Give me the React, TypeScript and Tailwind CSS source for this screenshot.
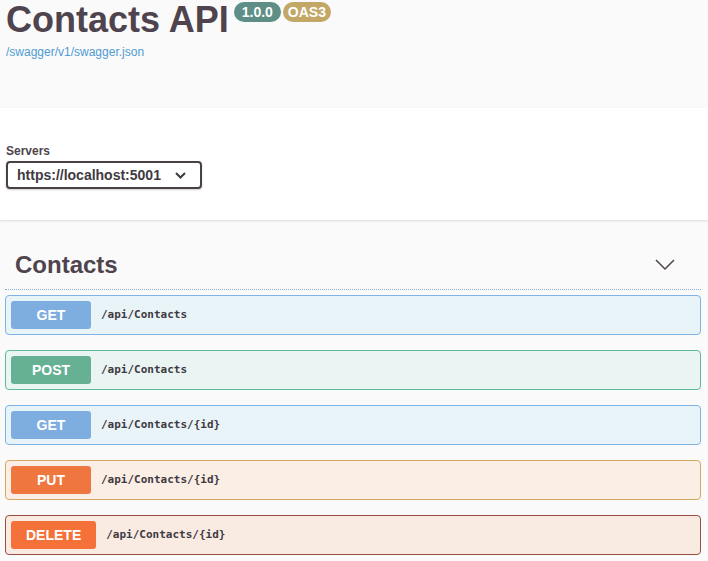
import React from "react";

const sans = "font-['Liberation_Sans',Arial,sans-serif]";
const mono = "font-['DejaVu_Sans_Mono',monospace]";

type Op = {
  method: string;
  path: string;
  box: string;
  badge: string;
};

const ops: Op[] = [
  { method: "GET", path: "/api/Contacts", box: "border-[#7eb3e6] bg-[#e9f4f8]", badge: "bg-[#7eaee0]" },
  { method: "POST", path: "/api/Contacts", box: "border-[#5fba98] bg-[#e9f4f3]", badge: "bg-[#66b094]" },
  { method: "GET", path: "/api/Contacts/{id}", box: "border-[#7eb3e6] bg-[#e9f4f8]", badge: "bg-[#7eaee0]" },
  { method: "PUT", path: "/api/Contacts/{id}", box: "border-[#d4aa62] bg-[#fbeee5]", badge: "bg-[#f07640]" },
  { method: "DELETE", path: "/api/Contacts/{id}", box: "border-[#9a4e3e] bg-[#f9ebe2]", badge: "bg-[#f4713a]" },
];

function OpBlock({ op }: { op: Op }) {
  return (
    <div className={`mb-[15px] flex h-[40px] items-center rounded-[4px] border p-[5px] ${op.box}`}>
      <span
        className={`flex h-[28px] min-w-[80px] items-center justify-center rounded-[3px] px-[15px] text-[14px] font-bold text-white ${sans} ${op.badge}`}
      >
        {op.method}
      </span>
      <span className={`ml-[10px] text-[11px] font-semibold text-[#3f3a42] ${mono}`}>{op.path}</span>
    </div>
  );
}

export default function App() {
  return (
    <div className={`min-h-[561px] w-[708px] bg-[#fafafa] ${sans} text-[#4f444d]`}>
      {/* info */}
      <div className="h-[108px] px-[6px]">
        <div className="flex items-start">
          <h1 className="text-[36px] font-bold leading-[40px] text-[#4f434d]">Contacts API</h1>
          <span className="ml-[5px] mt-[2px] flex h-[20px] items-center rounded-full bg-[#5e8e85] px-[8px] text-[14px] font-bold text-white">
            1.0.0
          </span>
          <span className="ml-[2px] mt-[2px] flex h-[20px] items-center rounded-full bg-[#c3a767] px-[5px] text-[14px] font-bold text-white">
            OAS3
          </span>
        </div>
        <a className="mt-[4px] block text-[12px] leading-[16px] text-[#4f9bd3]">/swagger/v1/swagger.json</a>
      </div>

      {/* servers */}
      <div className="h-[112px] bg-white px-[6px] pt-[35px] shadow-[0_1px_2px_0_rgba(0,0,0,0.12)]">
        <div className="text-[12px] font-bold leading-[16px] text-[#4f444d]">Servers</div>
        <div className="mt-[2px] flex h-[28px] w-[196px] items-center rounded-[4px] border-2 border-[#4a4048] bg-white pl-[9px] pr-[14px] shadow-[0_1px_2px_0_rgba(0,0,0,0.2)]">
          <span className="flex-1 text-[14px] font-bold text-[#3f3a42]">https://localhost:5001</span>
          <svg width="11" height="7" viewBox="0 0 11 7" fill="none">
            <path d="M1 1l4.5 4.5L10 1" stroke="#3f3a42" strokeWidth="2" />
          </svg>
        </div>
      </div>

      {/* tag section */}
      <div className="ml-[5px] mr-[7px]">
        <div className="flex items-center border-b border-dotted border-[#8eabd0] pb-[10px] pl-[10px] pr-[26px] pt-[31px]">
          <h3 className="flex-1 text-[24px] font-bold leading-[28px] text-[#4f434d]">Contacts</h3>
          <svg width="20" height="12" viewBox="0 0 20 12" fill="none">
            <path d="M1 1l9 9 9-9" stroke="#4f434d" strokeWidth="1.5" />
          </svg>
        </div>
        <div className="mt-[5px]">
          {ops.map((op, i) => (
            <OpBlock key={i} op={op} />
          ))}
        </div>
      </div>
    </div>
  );
}
